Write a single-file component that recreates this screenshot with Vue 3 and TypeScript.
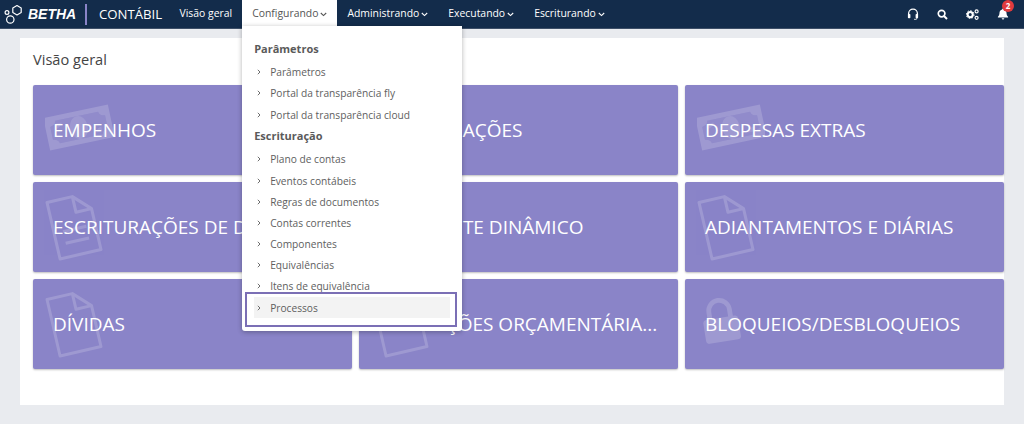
<script setup lang="ts">
type Kind = 'money' | 'doc' | 'report' | 'lock'

const nav = ['Administrando', 'Executando', 'Escriturando']

const groups = [
  {
    title: 'Parâmetros',
    items: ['Parâmetros', 'Portal da transparência fly', 'Portal da transparência cloud'],
  },
  {
    title: 'Escrituração',
    items: ['Plano de contas', 'Eventos contábeis', 'Regras de documentos', 'Contas correntes', 'Componentes', 'Equivalências', 'Itens de equivalência', 'Processos'],
  },
]

const cards: { title: string; icon: Kind }[] = [
  { title: 'EMPENHOS', icon: 'money' },
  { title: 'ARRECADAÇÕES', icon: 'money' },
  { title: 'DESPESAS EXTRAS', icon: 'money' },
  { title: 'ESCRITURAÇÕES DE DÍVIDAS', icon: 'report' },
  { title: 'ASSISTENTE DINÂMICO', icon: 'doc' },
  { title: 'ADIANTAMENTOS E DIÁRIAS', icon: 'doc' },
  { title: 'DÍVIDAS', icon: 'doc' },
  { title: 'ALTERAÇÕES ORÇAMENTÁRIA...', icon: 'doc' },
  { title: 'BLOQUEIOS/DESBLOQUEIOS', icon: 'lock' },
]
</script>

<template>
  <div class="page">
    <header class="topbar">
      <div class="logo">
        <svg width="22" height="24" viewBox="0 0 22 24" fill="none" stroke="#fff" stroke-width="1.2">
          <circle cx="3" cy="10.500" r="1.900" />
          <path d="M13 3.500l4.200 2.400v4.700L13 13l-4.200-2.400V5.900z" stroke-linejoin="round" />
          <circle cx="6.300" cy="17.500" r="3.700" />
        </svg>
        <span class="brand">BETHA</span>
      </div>
      <span class="divider"></span>
      <span class="product">CONTÁBIL</span>
      <nav class="nav">
        <a class="nav-item">Visão geral</a>
        <div class="nav-item open">
          Configurando
          <svg class="caret" width="7" height="5" viewBox="0 0 7 5"><path d="M.8 1l2.700 2.600L6.200 1" fill="none" stroke="currentColor" stroke-width="1.100" /></svg>
          <div class="menu">
            <template v-for="g in groups" :key="g.title">
              <div class="menu-title">{{ g.title }}</div>
              <a v-for="item in g.items" :key="item" class="menu-item" :class="{ active: item === 'Processos' }">
                <svg width="4" height="6" viewBox="0 0 4 6"><path d="M.8.8L3 3 .8 5.200" fill="none" stroke="currentColor" stroke-width=".9" /></svg>
                {{ item }}
              </a>
            </template>
            <span class="callout"></span>
          </div>
        </div>
        <a v-for="n in nav" :key="n" class="nav-item">
          {{ n }}
          <svg class="caret" width="7" height="5" viewBox="0 0 7 5"><path d="M.8 1l2.700 2.600L6.200 1" fill="none" stroke="currentColor" stroke-width="1.100" /></svg>
        </a>
      </nav>
      <div class="tools">
        <svg width="12" height="12" viewBox="0 0 12 12" fill="none" stroke="#fff">
          <path d="M1.600 7V5.500a4.400 4.400 0 0 1 8.800 0V7" stroke-width="1.300" />
          <rect x=".9" y="6" width="2.500" height="4.200" rx=".8" fill="#fff" stroke="none" />
          <rect x="8.600" y="6" width="2.500" height="4.200" rx=".8" fill="#fff" stroke="none" />
          <path d="M10 10l-.6 1.300H7" stroke-width=".8" />
        </svg>
        <svg width="11" height="11" viewBox="0 0 11 11" fill="none" stroke="#fff">
          <circle cx="4.600" cy="4.600" r="3.300" stroke-width="1.700" />
          <path d="M7 7l3 3" stroke-width="2" />
        </svg>
        <svg width="13" height="11" viewBox="0 0 13 11" fill="none" stroke="#fff">
          <circle cx="4.200" cy="5.600" r="2.600" stroke-width="2.100" />
          <circle cx="4.200" cy="5.600" r="3.900" stroke-width="1" stroke-dasharray="1.500 1.500" />
          <circle cx="10.600" cy="2.400" r="1.500" stroke-width="1.200" />
          <circle cx="10.600" cy="8.800" r="1.500" stroke-width="1.200" />
        </svg>
        <span class="bell">
          <svg width="12" height="12" viewBox="0 0 12 12" fill="#fff">
            <path d="M6 .6c.5 0 .8.3.8.8 1.800.3 2.700 1.700 2.700 3.400 0 2 .6 3 1.600 4v.8H.9v-.8c1-1 1.600-2 1.600-4 0-1.700.9-3.100 2.700-3.400 0-.5.3-.8.8-.8zM4.700 10.300h2.600a1.300 1.300 0 0 1-2.600 0z" />
          </svg>
          <b class="badge">2</b>
        </span>
      </div>
    </header>

    <main class="panel">
      <h1>Visão geral</h1>
      <div class="grid">
        <div v-for="c in cards" :key="c.title" class="card">
          <svg v-if="c.icon === 'money'" class="card-icon money" viewBox="0 0 68 55">
            <g transform="rotate(-12 34 27.500)">
              <path fill-rule="evenodd" d="M1 11h66v33H1zM12 16q0 4-6 5v13q6 1 6 5h44q0-4 6-5V21q-6-1-6-5z" />
              <path opacity=".35" d="M12 16q0 4-6 5v13q6 1 6 5h44q0-4 6-5V21q-6-1-6-5z" />
              <ellipse cx="34" cy="27.500" rx="9" ry="11.500" />
              <path d="M12 19h6q-1 4-6 5zM56 36h-6q1-4 6-5z" />
            </g>
          </svg>
          <svg v-else-if="c.icon === 'lock'" class="card-icon lock" viewBox="0 0 50 60">
            <g transform="rotate(-9 25 32)">
              <path fill="none" stroke="#fff" stroke-width="6" d="M12 28V17a13 13 0 0 1 26 0v11" />
              <rect x="3" y="26" width="44" height="30" rx="4" fill="#fff" />
            </g>
          </svg>
          <svg v-else class="card-icon doc" viewBox="0 0 66 70">
            <g transform="rotate(-13 33 35)" fill="none" stroke="#fff" stroke-width="3" stroke-linejoin="round">
              <path d="M12 6h26l16 16v42H12z" />
              <path d="M38 6v16h16" />
              <path v-if="c.icon === 'report'" d="M21 50h24M21 38h24" />
            </g>
          </svg>
          <span class="card-title">{{ c.title }}</span>
        </div>
      </div>
    </main>
  </div>
</template>

<style>
html, body {
  margin: 0;
  background: #e9ebef;
}
</style>

<style scoped>
.page {
  height: 424px;
  overflow: hidden;
  font-family: "Open Sans", sans-serif;
  background: #e9ebef;
}
.topbar {
  height: 29px;
  box-sizing: border-box;
  background: #132c4b;
  border-bottom: 1px solid #3d4f68;
  display: flex;
  align-items: center;
  color: #fff;
  padding-left: 4px;
}
.logo {
  display: flex;
  align-items: center;
  width: 81px;
  gap: 2px;
}
.brand {
  font-family: "Liberation Sans", sans-serif;
  font-weight: 700;
  font-style: italic;
  font-size: 14px;
}
.divider {
  width: 2px;
  height: 21px;
  background: #8a84c8;
  margin-right: 12px;
}
.product {
  font-size: 13.200px;
  width: 70.500px;
}
.nav {
  display: flex;
  height: 28px;
  font-size: 10.400px;
}
.nav-item {
  position: relative;
  padding: 0 10px;
  height: 26px;
  display: flex;
  align-items: center;
  gap: 2px;
  color: #fff;
  white-space: nowrap;
}
.nav-item.open {
  background: #fff;
  color: #555;
  z-index: 5;
}
.caret {
  margin-top: 2px;
}
.menu {
  position: absolute;
  top: 26px;
  left: 0;
  width: 220px;
  height: 305px;
  box-sizing: border-box;
  padding: 12px 12px 0;
  background: #fff;
  border-radius: 0 0 3px 3px;
  box-shadow: 0 1px 5px rgba(0, 0, 0, .3);
  font-size: 10.200px;
}
.menu-title {
  height: 23.600px;
  line-height: 22px;
  font-weight: 700;
  font-size: 11px;
  color: #5a5a5a;
}
.menu-item {
  height: 21.200px;
  display: flex;
  align-items: center;
  gap: 9px;
  padding-left: 3px;
  color: #5e5e5e;
}
.menu-item.active {
  background: #f3f3f3;
}
.callout {
  position: absolute;
  left: 3px;
  top: 266px;
  width: 212px;
  height: 35px;
  box-sizing: border-box;
  border: 2px solid #7b6fb5;
}
.panel {
  margin: 9px 20px 0;
  height: 367px;
  background: #fff;
  padding-left: 13px;
  box-sizing: border-box;
}
h1 {
  margin: 0;
  padding-top: 11px;
  height: 47px;
  box-sizing: border-box;
  font-size: 14.600px;
  line-height: 20px;
  font-weight: 400;
  color: #444;
}
.grid {
  display: grid;
  grid-template-columns: repeat(3, 1fr);
  grid-auto-rows: 90px;
  gap: 7px;
}
.card {
  position: relative;
  display: flex;
  align-items: center;
  padding: 0 20px;
  min-width: 0;
  background: #8a84c8;
  border-radius: 2px;
  box-shadow: 0 1px 2px rgba(0, 0, 0, .25);
  overflow: hidden;
}
.card-title {
  position: relative;
  color: #fff;
  font-size: 19px;
  white-space: nowrap;
}
.card-icon {
  position: absolute;
  opacity: .17;
  fill: #fff;
}
.money {
  left: 12px;
  top: 15px;
  width: 68px;
  height: 55px;
}
.doc {
  left: 8px;
  top: 9px;
  width: 66px;
  height: 70px;
}
.lock {
  left: 16px;
  top: 15px;
  width: 40px;
  height: 54px;
}
.tools {
  margin-left: auto;
  padding-right: 15px;
  display: flex;
  align-items: center;
  gap: 18px;
}
.bell {
  position: relative;
  display: flex;
}
.badge {
  position: absolute;
  left: 5px;
  top: -8px;
  width: 12px;
  height: 12px;
  border-radius: 50%;
  background: #e03a3e;
  color: #fff;
  font-size: 8px;
  line-height: 12px;
  text-align: center;
}
</style>
